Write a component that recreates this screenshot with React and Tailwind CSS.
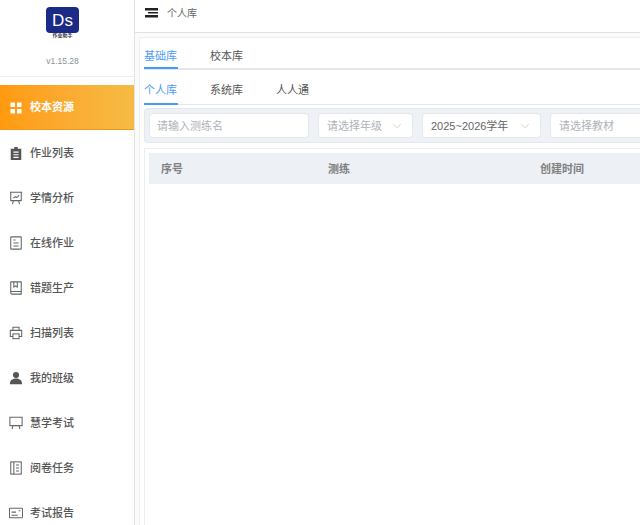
import React from 'react';
import { ChevronDown } from 'lucide-react';

const icons = {
  clipboard: (
    <svg width="14" height="14" viewBox="0 0 16 16" fill="#555">
      <path d="M2 3h4V1h4v2h4v13H2z" />
      <path d="M5 7h6M5 10h6M5 13h6" stroke="#fff" strokeWidth="1.2" />
    </svg>
  ),
  chart: (
    <svg width="14" height="14" viewBox="0 0 16 16" fill="none" stroke="#666" strokeWidth="1.2">
      <path d="M1 1.5h14M2 1.5v9.5h12V1.5" />
      <path d="M5 8l2.5-1.5 1.5 1L11.5 5M5 11l-1 4M11 11l1 4" />
    </svg>
  ),
  doc: (
    <svg width="14" height="14" viewBox="0 0 16 16" fill="none" stroke="#666" strokeWidth="1.2">
      <rect x="2" y="1" width="12" height="14" rx="0.5" />
      <path d="M5 4.5h2.5M5 8h6M5 11.5h6" />
    </svg>
  ),
  book: (
    <svg width="14" height="14" viewBox="0 0 16 16" fill="none" stroke="#666" strokeWidth="1.2">
      <path d="M2 1h12v14H3.5A1.5 1.5 0 0 1 2 13.5z" />
      <path d="M2 12h12M5.5 1v6l2-1.3 2 1.3V1" />
    </svg>
  ),
  printer: (
    <svg width="14" height="14" viewBox="0 0 16 16" fill="none" stroke="#666" strokeWidth="1.2">
      <path d="M4.5 5V1.5h7V5M4.5 12H1.5V5h13v7h-3" />
      <rect x="4.5" y="9" width="7" height="5.5" />
    </svg>
  ),
  user: (
    <svg width="14" height="14" viewBox="0 0 16 16" fill="#555">
      <circle cx="8" cy="4.5" r="3.5" />
      <path d="M1 15c0-4 2.5-6.5 7-6.5s7 2.5 7 6.5z" />
    </svg>
  ),
  board: (
    <svg width="14" height="14" viewBox="0 0 16 16" fill="none" stroke="#666" strokeWidth="1.2">
      <path d="M1 1.5h14v9.5H1zM4.5 11l-1 4M11.5 11l1 4" />
    </svg>
  ),
  notebook: (
    <svg width="14" height="14" viewBox="0 0 16 16" fill="none" stroke="#666" strokeWidth="1.2">
      <rect x="2" y="1" width="12" height="14" />
      <path d="M5.5 1v14M8 4.5h3.5M8 8h3.5M8 11.5h3.5" />
    </svg>
  ),
  card: (
    <svg width="14" height="14" viewBox="0 0 16 16" fill="none" stroke="#666" strokeWidth="1.2">
      <rect x="0.5" y="2.5" width="15" height="11" rx="1" />
      <path d="M3 7h5M3 10.5h7M11 5.5h2" />
    </svg>
  ),
};

const menu = [
  { label: '作业列表', icon: 'clipboard' },
  { label: '学情分析', icon: 'chart' },
  { label: '在线作业', icon: 'doc' },
  { label: '错题生产', icon: 'book' },
  { label: '扫描列表', icon: 'printer' },
  { label: '我的班级', icon: 'user' },
  { label: '慧学考试', icon: 'board' },
  { label: '阅卷任务', icon: 'notebook' },
  { label: '考试报告', icon: 'card' },
];

const Tab = ({ label, active }) => (
  <div className={`relative flex h-full w-[34px] items-center whitespace-nowrap pt-[6px] text-[11px] ${active ? 'text-[#4b9cf5]' : 'text-[#555]'}`}>
    {label}
    {active && <div className="absolute -bottom-px left-0 h-0.5 w-full bg-[#409eff]" />}
  </div>
);

const Select = ({ label, placeholder, width }) => (
  <div className={`${width} flex h-[25px] shrink-0 items-center justify-between rounded border border-[#e4e7ed] bg-white px-2 text-[11px] ${placeholder ? 'text-[#b0b3b8]' : 'text-[#666]'}`}>
    <span className="whitespace-nowrap pt-[2px]">{label}</span>
    <ChevronDown size={14} strokeWidth={1} color="#b0b3b8" />
  </div>
);

export default function App() {
  return (
    <div className="flex h-[525px] w-[640px] overflow-hidden bg-white font-['Liberation_Sans','Noto_Sans_CJK_SC',sans-serif]">
      <aside className="flex w-[135px] shrink-0 flex-col border-r border-[#e2e2e2]">
        <div className="flex h-[77px] shrink-0 flex-col items-center border-b border-[#efefef] pr-[9px] pt-[7px]">
          <div className="flex h-[26px] w-[33px] items-center justify-center rounded-[4px] bg-[#1a2a86] text-[17px] leading-none text-white">Ds</div>
          <div className="flex h-[6px] w-[33px] items-center justify-center whitespace-nowrap text-[5px] font-semibold text-[#334]">作业助手</div>
          <div className="mt-[15px] text-[8.5px] leading-[15px] text-[#8a8f96]">v1.15.28</div>
        </div>
        <div className="mt-[8px] flex h-[45px] shrink-0 items-center gap-[8px] border-b border-[#f09a1a] bg-gradient-to-r from-[#ff9a0d] to-[#f6bb45] pl-[10px] pt-px text-[11px] font-bold text-white">
          <svg width="12" height="12" viewBox="0 0 12 12" fill="#fff">
            <rect x="0.5" y="0.5" width="4.5" height="4.5" rx="0.5" />
            <rect x="7" y="0.5" width="4.5" height="4.5" rx="0.5" />
            <rect x="0.5" y="7" width="4.5" height="4.5" rx="0.5" />
            <rect x="7" y="7" width="4.5" height="4.5" rx="0.5" />
          </svg>
          校本资源
        </div>
        {menu.map(item => (
          <div key={item.label} className="flex h-[45px] shrink-0 items-center gap-[7px] pl-[9px] pt-px text-[11px] font-medium text-[#555]">
            {icons[item.icon]}
            {item.label}
          </div>
        ))}
      </aside>

      <main className="flex min-w-0 flex-1 flex-col bg-[#fbfbf7]">
        <header className="flex h-[33px] shrink-0 items-center gap-[9px] border-b border-[#e2e2e2] bg-white pb-[6px] pl-[10px]">
          <svg width="13" height="12" viewBox="0 0 13 12" fill="#222">
            <rect x="0" y="1" width="13" height="2.5" />
            <rect x="3" y="5" width="10" height="1.5" />
            <rect x="0" y="8" width="13" height="2.5" />
          </svg>
          <span className="text-[10px] text-[#666]">个人库</span>
        </header>

        <div className="ml-1 mt-1 flex min-h-0 flex-1 flex-col border-l border-t border-[#eceef3] bg-white pl-1">
          <div className="flex h-[32px] shrink-0 gap-[32px] border-b-2 border-[#e4e7ed]">
            <Tab label="基础库" active />
            <Tab label="校本库" />
          </div>
          <div className="flex h-[35px] shrink-0 gap-[32px] border-b border-[#e4e7ed]">
            <Tab label="个人库" active />
            <Tab label="系统库" />
            <Tab label="人人通" />
          </div>

          <div className="mt-[3px] flex h-[35px] shrink-0 items-center gap-[9px] rounded-l border border-r-0 border-[#e4e7ed] bg-[#eef2f6] pl-[4px]">
            <div className="flex h-[25px] w-[160px] shrink-0 items-center rounded border border-[#e4e7ed] bg-white pl-[7px] pt-[2px] text-[11px] text-[#b0b3b8]">请输入测练名</div>
            <Select label="请选择年级" placeholder width="w-[95px]" />
            <Select label="2025~2026学年" width="w-[119px]" />
            <div className="flex h-[25px] w-[120px] shrink-0 items-center rounded border border-[#e4e7ed] bg-white pl-2 pt-[2px] text-[11px] text-[#b0b3b8]">请选择教材</div>
          </div>

          <div className="mt-[5px] min-h-0 flex-1 border-l border-t border-[#eceef3] pl-[4px] pt-[4px]">
            <div className="flex h-[31px] items-center bg-[#edf1f6] pt-px text-[11px] font-semibold text-[#808080]">
              <div className="w-[179px] pl-[12px]">序号</div>
              <div className="w-[212px]">测练</div>
              <div>创建时间</div>
            </div>
          </div>
        </div>
      </main>
    </div>
  );
}
